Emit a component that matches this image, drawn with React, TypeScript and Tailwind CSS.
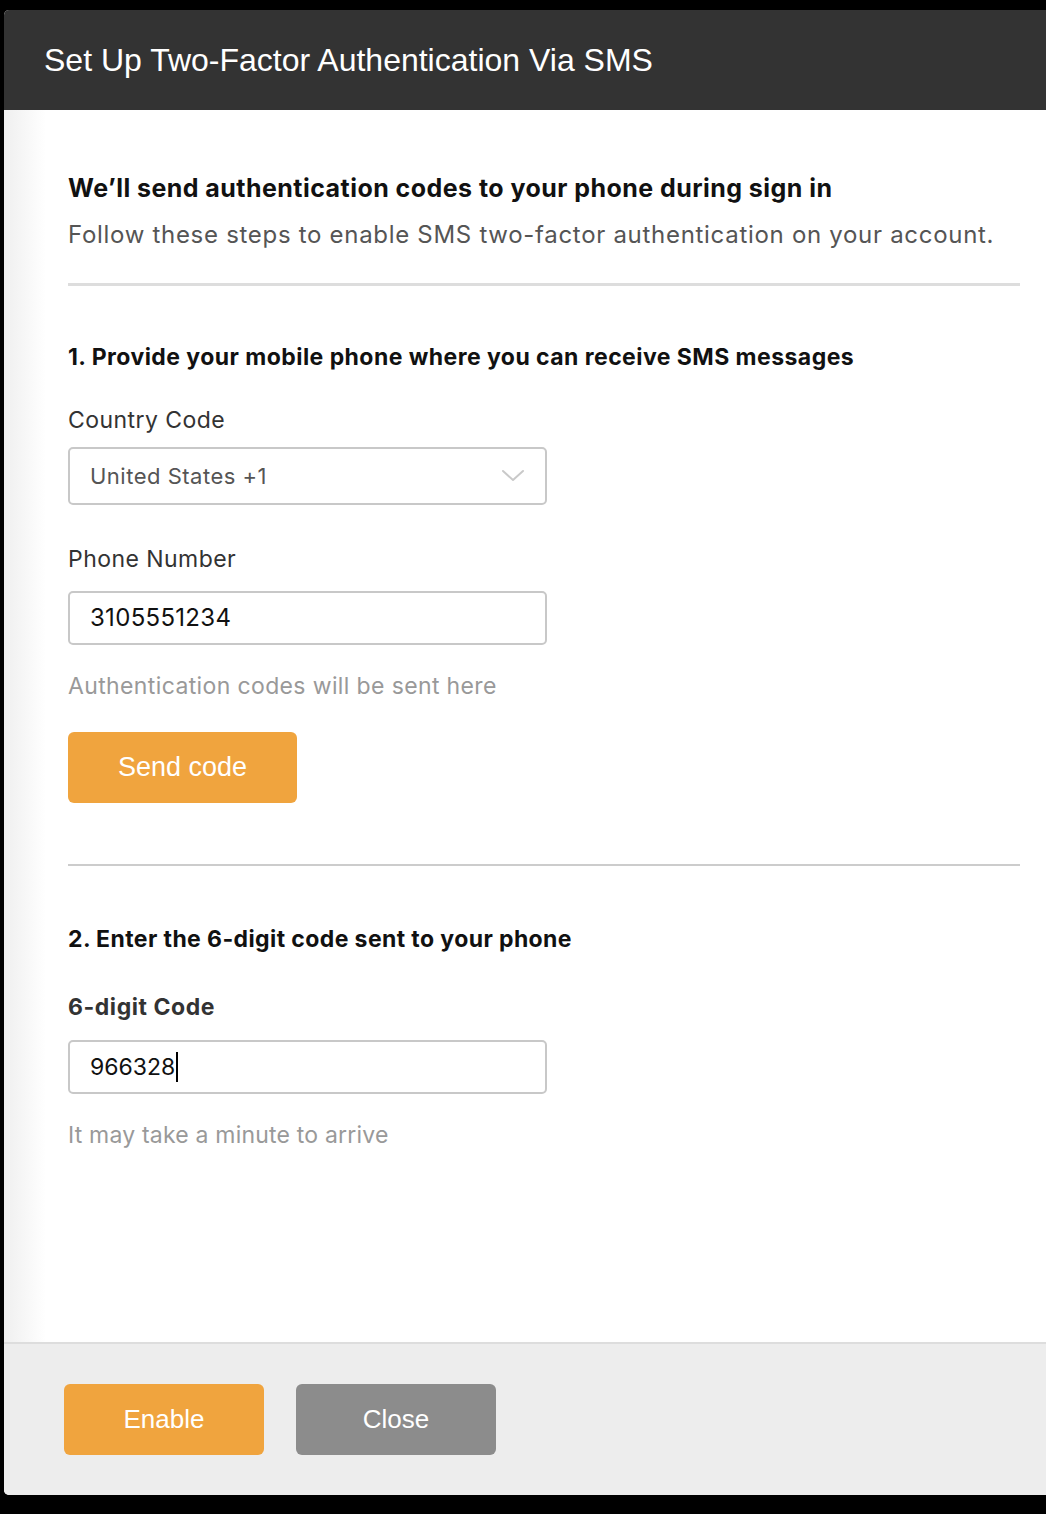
const inter = "font-['Inter','Noto_Sans',sans-serif]";
const helv = "font-['Liberation_Sans','Arial',sans-serif]";

const Chevron = () => (
  <svg width="24" height="14" viewBox="0 0 24 14" fill="none">
    <polyline points="2,2 12,11 22,2" stroke="#c9c9c9" strokeWidth="2" strokeLinecap="round" strokeLinejoin="round" />
  </svg>
);

const App = () => {
  return (
    <div className="min-h-[1514px] bg-black pt-[10px] pl-[4px]">
      <div className="flex h-[1485px] flex-col overflow-hidden rounded-l-[5px] bg-white">
        <header className="flex h-[100px] items-center bg-[#333333] pl-[40px]">
          <h1 className={`${helv} text-[32px] leading-none text-white`}>
            Set Up Two-Factor Authentication Via SMS
          </h1>
        </header>

        <main className={`${inter} flex-1 bg-[linear-gradient(to_right,#efefef,#ffffff_42px)] pl-[64px] pr-[26px] pt-[62px]`}>
          <h2 className="text-[25px] font-bold leading-[32px] tracking-[0.45px] text-[#111]">
            We’ll send authentication codes to your phone during sign in
          </h2>
          <p className="mt-[15px] text-[24px] leading-[32px] tracking-[0.7px] text-[#555]">
            Follow these steps to enable SMS two-factor authentication on your account.
          </p>
          <div className="mt-[32px] h-[3px] bg-[#dddddd]" />

          <h3 className="mt-[55px] text-[23px] font-bold leading-[32px] tracking-[0.45px] text-[#111]">
            1. Provide your mobile phone where you can receive SMS messages
          </h3>
          <label className="mt-[31px] block text-[23px] leading-[32px] tracking-[0.45px] text-[#333]">Country Code</label>
          <div className="mt-[11px] flex h-[58px] w-[479px] items-center justify-between rounded-[5px] border-2 border-[#c8c8c8] pl-[20px] pr-[20px]">
            <span className="text-[22px] tracking-[0.5px] text-[#555]">United States +1</span>
            <Chevron />
          </div>

          <label className="mt-[38px] block text-[23px] leading-[32px] tracking-[0.45px] text-[#333]">Phone Number</label>
          <div className="mt-[16px] flex h-[54px] w-[479px] items-center rounded-[5px] border-2 border-[#c8c8c8] pl-[20px]">
            <span className="text-[24px] tracking-[0.3px] text-[#111]">3105551234</span>
          </div>
          <p className="mt-[25px] text-[23px] leading-[32px] tracking-[0.37px] text-[#999]">Authentication codes will be sent here</p>
          <button className={`${helv} mt-[30px] h-[71px] w-[229px] rounded-[6px] bg-[#f0a43e] text-[27px] text-white`}>
            Send code
          </button>

          <div className="mt-[61px] h-[2px] bg-[#cccccc]" />

          <h3 className="mt-[57px] text-[23px] font-bold leading-[32px] tracking-[0.4px] text-[#111]">
            2. Enter the 6-digit code sent to your phone
          </h3>
          <label className="mt-[36px] block text-[23px] font-bold leading-[32px] tracking-[0.55px] text-[#333]">6-digit Code</label>
          <div className="mt-[17px] flex h-[54px] w-[479px] items-center rounded-[5px] border-2 border-[#c8c8c8] pl-[20px]">
            <span className="text-[23px] text-[#111]">966328</span>
            <span className="ml-[1px] h-[30px] w-[2px] bg-black" />
          </div>
          <p className="mt-[25px] text-[23px] leading-[32px] tracking-[0.2px] text-[#999]">It may take a minute to arrive</p>
        </main>

        <footer className="flex gap-[32px] border-t-2 border-[#dddddd] bg-[#ededed] pl-[60px] pt-[40px] pb-[40px]">
          <button className={`${helv} h-[71px] w-[200px] rounded-[6px] bg-[#f0a43e] text-[26px] text-white`}>Enable</button>
          <button className={`${helv} h-[71px] w-[200px] rounded-[6px] bg-[#8c8c8c] text-[26px] text-white`}>Close</button>
        </footer>
      </div>
    </div>
  );
};

export default App;
